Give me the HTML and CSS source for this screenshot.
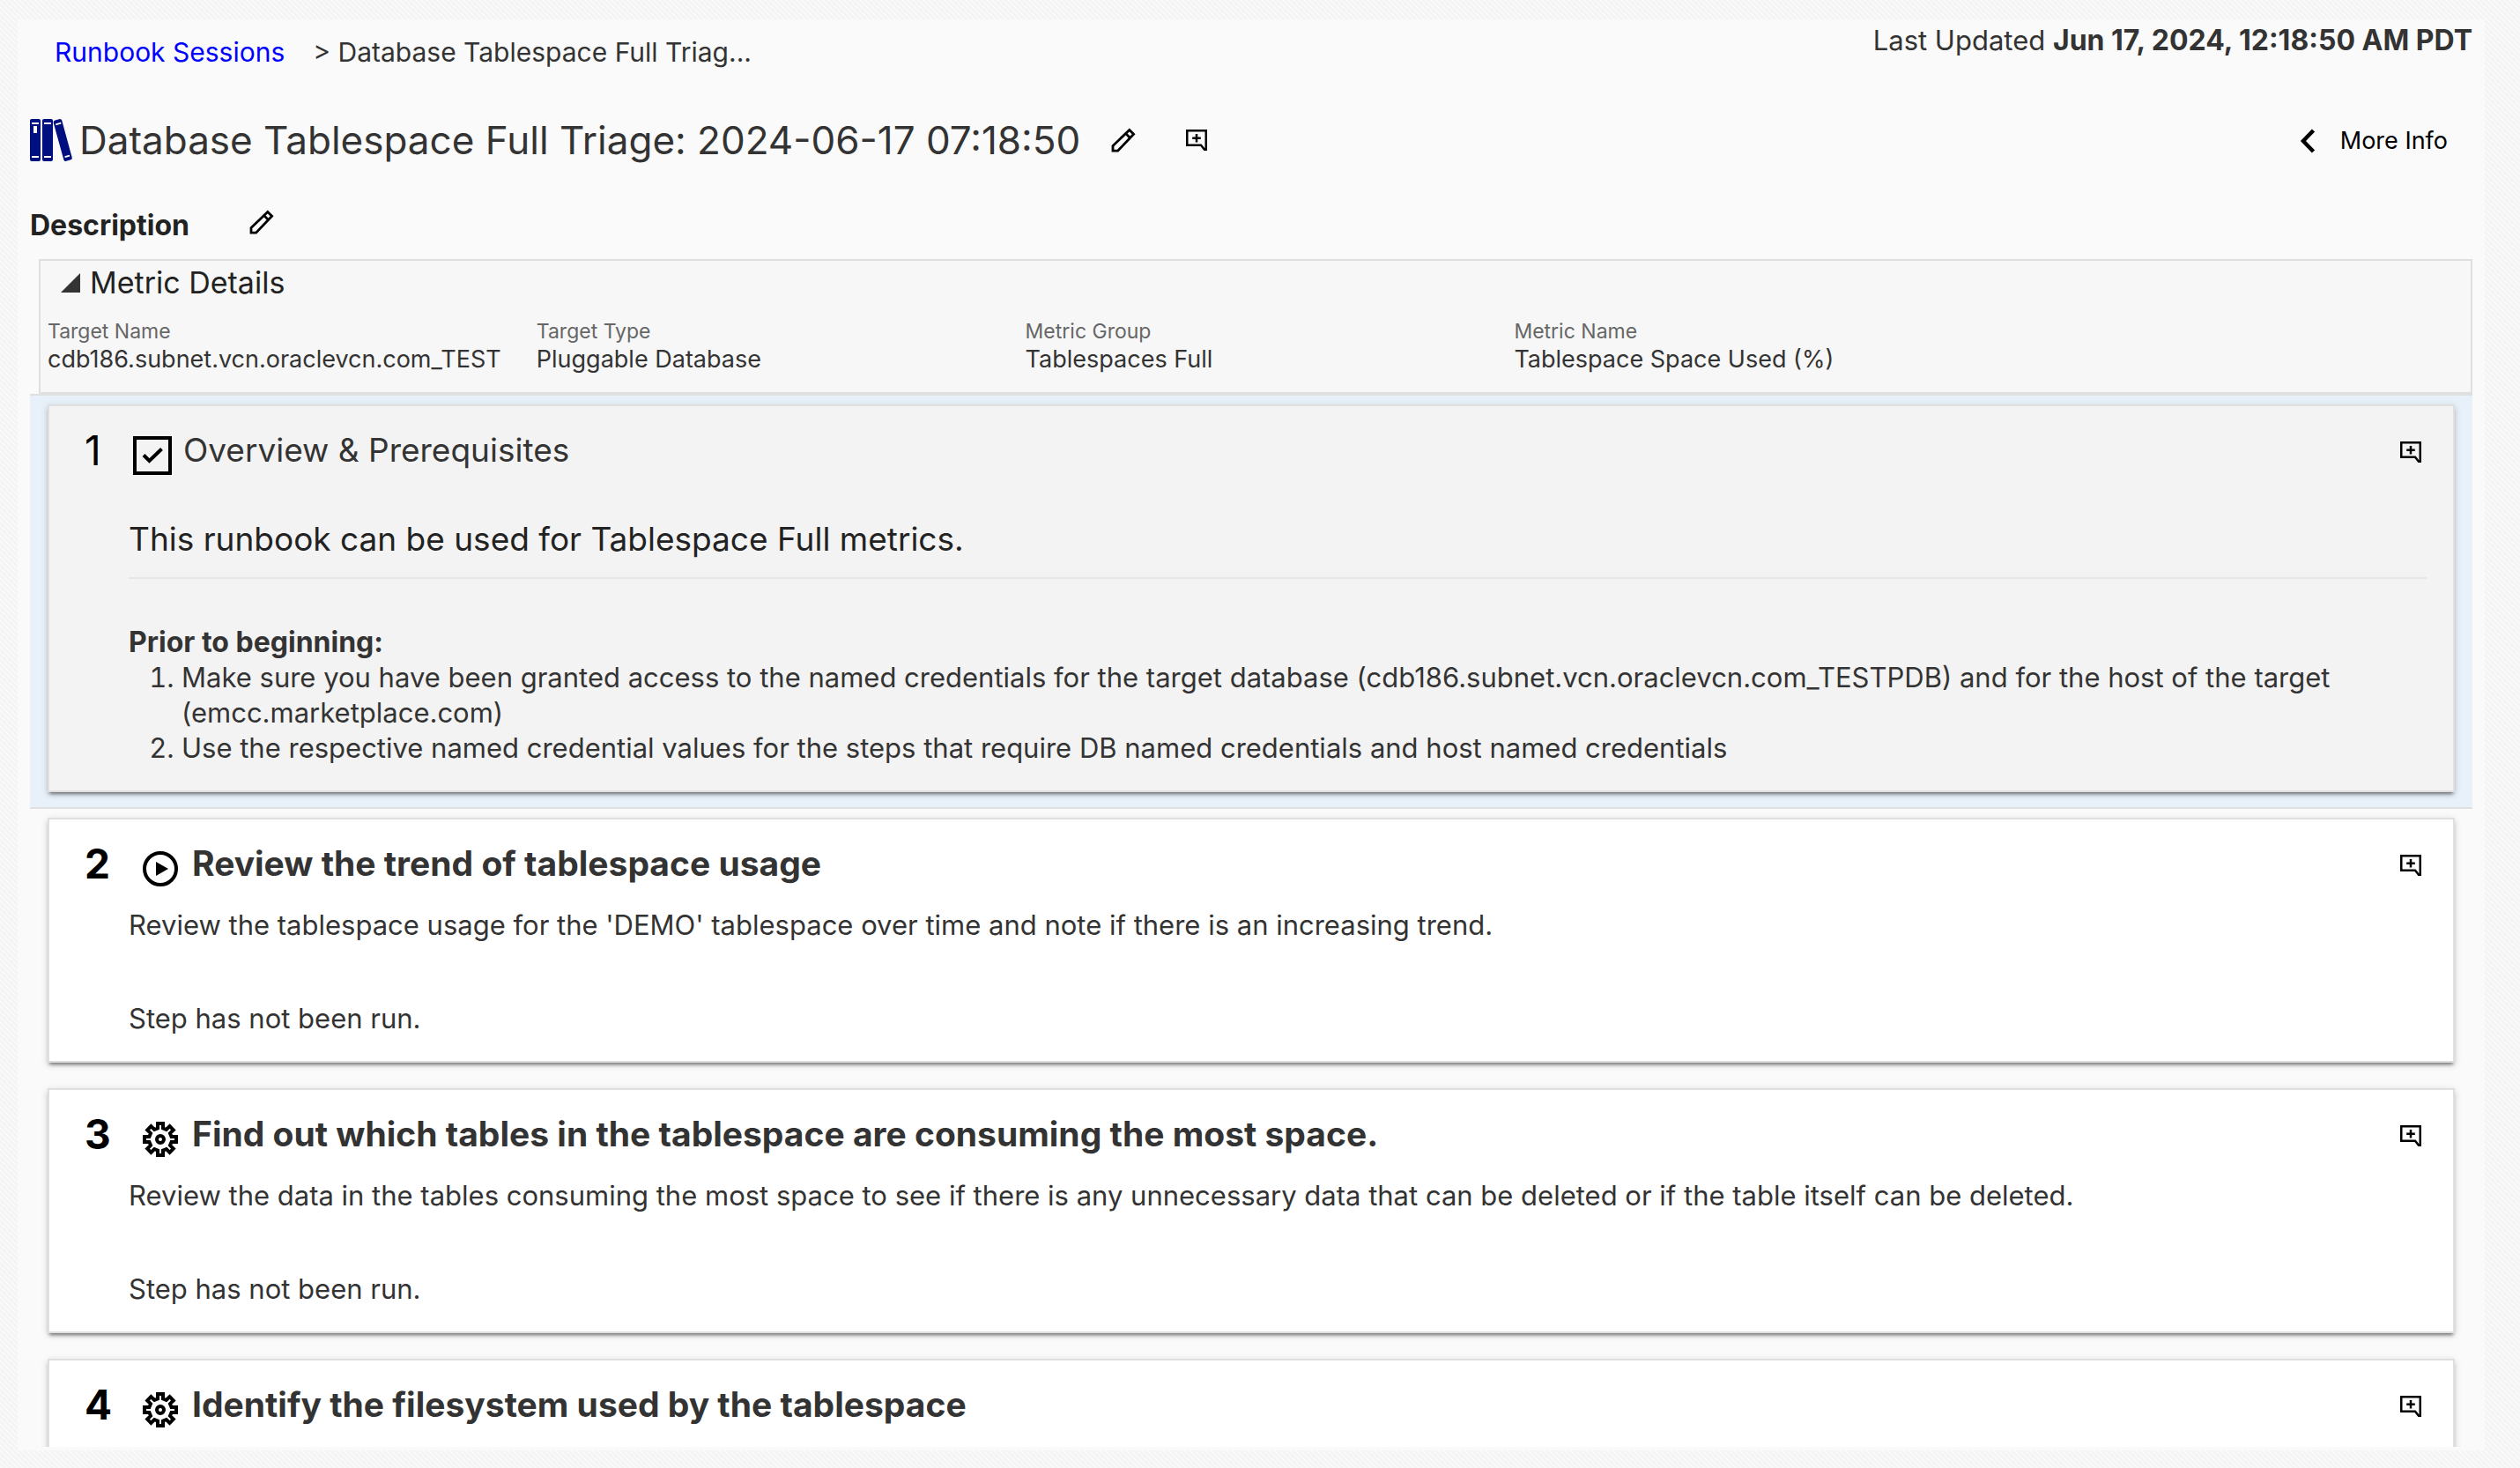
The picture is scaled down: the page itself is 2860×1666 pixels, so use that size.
FILE: index.html
```html
<!DOCTYPE html>
<html lang="en">
<head>
<meta charset="utf-8">
<meta name="viewport" content="width=device-width, initial-scale=1">
<title>Runbook Session</title>
<link rel="stylesheet" href="styles.css">
</head>
<body>
<svg class="sprite" aria-hidden="true">
  <symbol id="pencil" viewBox="0 0 28 28">
    <path d="M2 26.200V20.600L20.800 2.400L25.600 7.200L7.600 26.200Z M16.800 6.600L21.200 11.200" fill="none" stroke="currentColor" stroke-width="2.800"/>
  </symbol>
  <symbol id="note" viewBox="0 0 24 24">
    <path d="M1.250 1.250H22.750V22.750H21L17 17.750H1.250Z M12 5V14.500 M7.200 9.750H16.800" fill="none" stroke="currentColor" stroke-width="2.500"/>
  </symbol>
  <symbol id="gear" viewBox="-20 -20 40 40">
    <path d="M-3-12.600V-18H3V-12.600L6.800-11L10.600-14.800L14.800-10.600L11-6.800L12.600-3H18V3H12.600L11 6.800L14.800 10.600L10.600 14.800L6.800 11L3 12.600V18H-3V12.600L-6.800 11L-10.600 14.800L-14.800 10.600L-11 6.800L-12.600 3H-18V-3H-12.600L-11-6.800L-14.800-10.600L-10.600-14.800L-6.800-11Z" fill="none" stroke="currentColor" stroke-width="4"/>
    <circle r="4" fill="none" stroke="currentColor" stroke-width="4"/>
  </symbol>
</svg>

<main class="page">
  <header class="topbar">
    <nav class="crumbs" aria-label="Breadcrumb">
      <a href="#sessions">Runbook Sessions</a>
      <span>&gt; Database Tablespace Full Triag...</span>
    </nav>
    <p class="updated">Last Updated <strong>Jun 17, 2024, 12:18:50 AM PDT</strong></p>
  </header>

  <div class="title-row">
    <svg class="books" viewBox="0 0 48 48" aria-hidden="true">
      <rect width="12" height="48" rx="2"/>
      <rect x="14" width="12" height="48" rx="2"/>
      <path d="M28.500 1.500L34 0Q35.700 0 36.200 1.500L47.800 44Q48 45.700 46.500 46.200L40.500 48Q39 48 38.400 46.500L26.600 4Q26.500 2.200 28.500 1.500Z"/>
      <path class="books-mark" d="M2 4H10V6H2ZM4 8H8V16H4ZM2 42H10V44H2ZM16 4H24V6H16ZM16 42H24V44H16ZM29 5.500L35 3.800L35.500 5.600L29.500 7.300ZM39.300 42.300L44.800 40.700L45.300 42.500L39.800 44.100Z"/>
    </svg>
    <h1>Database Tablespace Full Triage: 2024-06-17 07:18:50</h1>
    <button class="icon-btn edit-title" aria-label="Edit name"><svg class="pencil"><use href="#pencil"/></svg></button>
    <button class="icon-btn note-title" aria-label="Add note"><svg class="note"><use href="#note"/></svg></button>
    <button class="more-info">
      <svg class="chevron" viewBox="0 0 18 28" aria-hidden="true"><path d="M15.500 2L4 14L15.500 26" fill="none" stroke="currentColor" stroke-width="4.500"/></svg>
      More Info
    </button>
  </div>

  <div class="description">
    <h2>Description</h2>
    <button class="icon-btn edit-description" aria-label="Edit description"><svg class="pencil"><use href="#pencil"/></svg></button>
  </div>

  <section class="metric">
    <h2>
      <button class="metric-toggle" aria-expanded="true">
        <svg class="triangle" viewBox="0 0 22 22" aria-hidden="true"><path d="M22 0V22H0Z"/></svg>
        Metric Details
      </button>
    </h2>
    <dl class="metric-grid">
      <div><dt>Target Name</dt><dd>cdb186.subnet.vcn.oraclevcn.com_TEST</dd></div>
      <div><dt>Target Type</dt><dd>Pluggable Database</dd></div>
      <div><dt>Metric Group</dt><dd>Tablespaces Full</dd></div>
      <div><dt>Metric Name</dt><dd>Tablespace Space Used (%)</dd></div>
    </dl>
  </section>

  <div class="steps">
    <section class="step step-active">
      <article class="card">
        <header class="card-head">
          <span class="num">1</span>
          <svg class="kind kind-check" viewBox="0 0 44 44" aria-hidden="true"><path d="M2 2H42V42H2Z M12 21.500L18.500 28L32.500 14.500" fill="none" stroke="currentColor" stroke-width="4"/></svg>
          <h3>Overview &amp; Prerequisites</h3>
          <button class="icon-btn card-note" aria-label="Add note to step 1"><svg class="note"><use href="#note"/></svg></button>
        </header>
        <div class="card-body">
          <p class="lead">This runbook can be used for Tablespace Full metrics.</p>
          <p><strong>Prior to beginning:</strong></p>
          <ol>
            <li>Make sure you have been granted access to the named credentials for the target database (cdb186.subnet.vcn.oraclevcn.com_TESTPDB) and for the host of the target (emcc.marketplace.com)</li>
            <li>Use the respective named credential values for the steps that require DB named credentials and host named credentials</li>
          </ol>
        </div>
      </article>
    </section>

    <section class="step">
      <article class="card">
        <header class="card-head">
          <span class="num">2</span>
          <svg class="kind" viewBox="0 0 40 40" aria-hidden="true"><circle cx="20" cy="20" r="18" fill="none" stroke="currentColor" stroke-width="4"/><path d="M15 12L29 20L15 28Z"/></svg>
          <h3>Review the trend of tablespace usage</h3>
          <button class="icon-btn card-note" aria-label="Add note to step 2"><svg class="note"><use href="#note"/></svg></button>
        </header>
        <div class="card-body">
          <p class="summary">Review the tablespace usage for the 'DEMO' tablespace over time and note if there is an increasing trend.</p>
          <p class="status">Step has not been run.</p>
        </div>
      </article>
    </section>

    <section class="step">
      <article class="card">
        <header class="card-head">
          <span class="num">3</span>
          <svg class="kind"><use href="#gear"/></svg>
          <h3>Find out which tables in the tablespace are consuming the most space.</h3>
          <button class="icon-btn card-note" aria-label="Add note to step 3"><svg class="note"><use href="#note"/></svg></button>
        </header>
        <div class="card-body">
          <p class="summary">Review the data in the tables consuming the most space to see if there is any unnecessary data that can be deleted or if the table itself can be deleted.</p>
          <p class="status">Step has not been run.</p>
        </div>
      </article>
    </section>

    <section class="step">
      <article class="card">
        <header class="card-head">
          <span class="num">4</span>
          <svg class="kind"><use href="#gear"/></svg>
          <h3>Identify the filesystem used by the tablespace</h3>
          <button class="icon-btn card-note" aria-label="Add note to step 4"><svg class="note"><use href="#note"/></svg></button>
        </header>
      </article>
    </section>
  </div>
</main>
</body>
</html>
```
FILE: styles.css
```css
* { box-sizing: border-box; }

body {
  margin: 0;
  height: 100vh;
  padding: 22px 40px 20px 20px;
  display: flex;
  flex-direction: column;
  font: 31px/40px Inter, "Liberation Sans", sans-serif;
  color: #333;
  background-color: #f9f9f9;
  background-image: linear-gradient(45deg, #f4f4f4 25%, #f9f9f9 25% 50%, #f4f4f4 50% 75%, #f9f9f9 75%);
  background-size: 6px 6px;
}

h1, h2, h3, p, dl, dd, ol { margin: 0; }

strong { font-size: 32px; }

button {
  padding: 0;
  border: 0;
  background: none;
  font: inherit;
  color: inherit;
  cursor: pointer;
}

svg { display: block; flex: none; }

.sprite { position: absolute; width: 0; height: 0; }

.page {
  flex: 1;
  min-height: 0;
  padding: 0 14px 4px;
  display: flex;
  flex-direction: column;
  background: #fafafa;
}

/* Top bar */
.topbar {
  display: flex;
  justify-content: space-between;
  flex: none;
}

.crumbs {
  padding: 17px 0 0 28px;
  display: flex;
  gap: 32px;
  font-size: 30px;
}

.crumbs a { color: #00f; text-decoration: none; }
.updated { padding-top: 4px; }

/* Title */
.title-row {
  margin-top: 52px;
  height: 56px;
  flex: none;
  display: flex;
  align-items: center;
}

.title-row h1 {
  margin-left: 8px;
  font-size: 44px;
  line-height: 56px;
  font-weight: 400;
}

.books { width: 48px; height: 48px; fill: #000f80; }
.books-mark { fill: #fff; }

.icon-btn { color: #000; flex: none; }
.pencil { width: 28px; height: 28px; }
.note { width: 24px; height: 24px; }
.edit-title { margin-left: 35px; }
.note-title { margin-left: 57px; }

.more-info {
  margin-left: auto;
  padding: 2px 28px 0 0;
  display: flex;
  align-items: center;
  gap: 28px;
  font-size: 27px;
  color: #000;
}

.chevron { width: 18px; height: 28px; }

/* Description */
.description {
  margin: 49px 0 18px;
  display: flex;
  flex: none;
}

.description h2 { font-size: 32px; line-height: 40px; color: #222; }
.edit-description { height: 32px; margin-left: 68px; }

/* Metric details */
.metric {
  flex: none;
  margin-left: 10px;
  padding: 3px 0 21px 8px;
  border: 2px solid #dfdfdf;
  background: #f7f7f7;
}

.metric h2 { line-height: 44px; font-size: 34px; font-weight: 400; color: #222; }

.metric-toggle {
  padding-left: 15px;
  display: flex;
  align-items: center;
  gap: 11px;
}

.triangle { width: 22px; height: 22px; fill: #333; }

.metric-grid {
  margin-top: 17px;
  display: grid;
  grid-template-columns: repeat(5, 1fr);
  column-gap: 24px;
  line-height: 32px;
}

.metric-grid dt { font-size: 23px; color: #666; }
.metric-grid dd { font-size: 27px; white-space: nowrap; }

/* Steps */
.steps {
  flex: 1;
  min-height: 0;
  overflow: hidden;
  border-top: 2px solid #dfe1e1;
}

.step {
  padding: 10px 20px 17px;
  border-bottom: 2px solid transparent;
}

.step-active { background: #e8f1f9; border-bottom-color: #dfe1e1; }

.card {
  padding: 22px 30px 28px 40px;
  border: 2px solid #dfdfdf;
  background: #fff;
  box-shadow: 0 4px 4px -2px rgba(0, 0, 0, .5), 0 2px 8px rgba(0, 0, 0, .15);
}

.step-active .card { background: #f3f3f3; }

.card-head { display: flex; align-items: center; line-height: 56px; }

.num {
  width: 50px;
  font-size: 46px;
  font-weight: 700;
  color: #000;
}

.kind {
  width: 40px;
  height: 40px;
  margin: 12px 16px 0 16px;
  color: #000;
  fill: #000;
}

.kind-check { width: 44px; height: 44px; margin: 12px 13px 0 5px; }

.card-head h3 { flex: 1; font-size: 39px; }
.card-note { padding: 4px 6px 0; }

.step-active .num { font-weight: 400; }
.step-active h3 { font-size: 37px; font-weight: 400; }

.card-body { padding-left: 50px; }

.lead {
  margin: 49px 0 52px;
  padding-bottom: 19px;
  border-bottom: 2px solid #e6e6e6;
  font-size: 37px;
  line-height: 48px;
  color: #222;
}

.card-body ol { padding-left: 60px; }
.summary { margin-top: 22px; }
.status { margin-top: 66px; }
```
